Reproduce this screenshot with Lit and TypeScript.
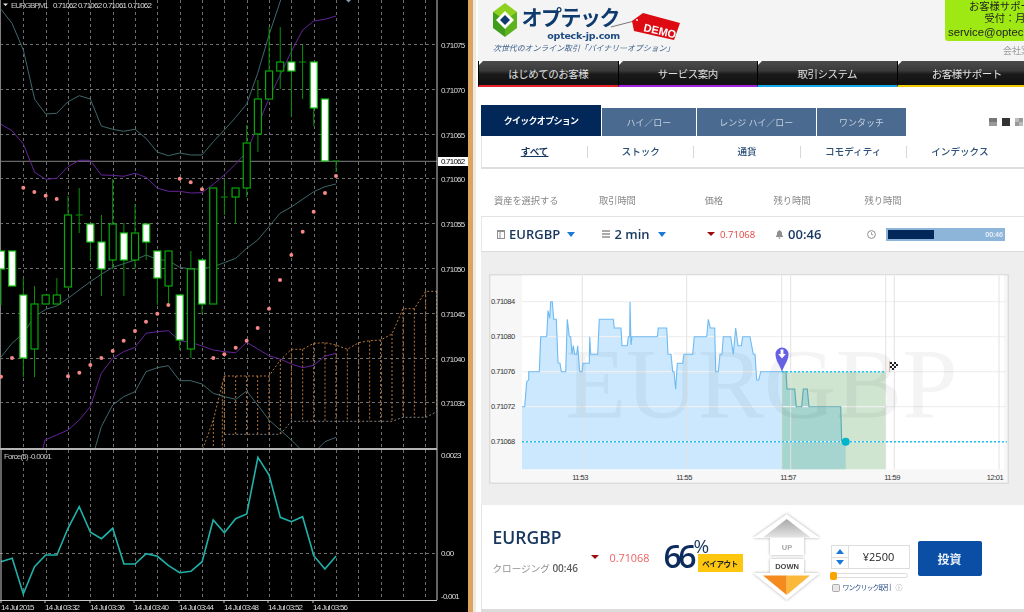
import { LitElement, html, css, svg } from 'lit';
import { customElement } from 'lit/decorators.js';

type Pt = [number, number];

// traced from the 3x crops: x and y are crop pixels, dy is the crop's top edge
const trace = (pts: Pt[], dy = 0) => pts.map(([x, y]) => `${(x / 3).toFixed(1)},${(dy + y / 3).toFixed(1)}`).join(' ');

const candleX = (i: number) => 1 + 11.17 * i;

// [wickTop, wickBottom, bodyTop, bodyBottom, white body]; bodyTop == bodyBottom is a doji
const CANDLES: [number, number, number, number, boolean][] = [
  [251, 305, 251, 269, true], [251, 286, 251, 286, true], [278, 377, 295, 358, true], [286, 377, 304, 349, false],
  [295, 304, 295, 304, false], [278, 304, 295, 304, false], [196, 287, 215, 287, false], [188, 233, 215, 215, false],
  [224, 260, 224, 242, true], [215, 296, 242, 269, true], [179, 269, 224, 260, false], [223, 296, 233, 260, true],
  [204, 269, 233, 260, false], [224, 260, 224, 242, true], [251, 305, 251, 278, true], [251, 304, 251, 286, false],
  [295, 350, 295, 340, true], [251, 358, 269, 349, false], [260, 314, 260, 304, true], [188, 304, 188, 304, false],
  [179, 215, 197, 197, false], [188, 224, 188, 197, false], [125, 197, 143, 188, false], [80, 152, 99, 134, false],
  [27, 99, 71, 99, false], [27, 89, 62, 71, false], [45, 117, 62, 71, true], [45, 99, 62, 62, false],
  [62, 126, 62, 108, true], [99, 161, 99, 161, true], [161, 172, 161, 161, false],
];

const UPPER_BAND: Pt[] = [[3, 28], [36, 70], [70, 150], [104, 298], [137, 342], [170, 340], [204, 305], [238, 287], [271, 297], [304, 378], [338, 388], [371, 394], [405, 388], [438, 415], [472, 456], [505, 467], [539, 459], [572, 465], [606, 465], [640, 425], [673, 390], [707, 352], [740, 312], [773, 220], [807, 105], [842, 0]];
const MID_TOP: Pt[] = [[3, 373], [36, 392], [70, 432], [104, 517], [137, 538], [170, 535], [204, 500], [238, 481], [271, 481], [304, 525], [338, 526], [371, 529], [405, 520], [438, 532], [472, 564], [505, 574], [539, 574], [572, 579], [606, 578], [640, 553], [673, 525], [707, 492], [740, 455], [773, 378], [807, 295], [842, 222], [874, 155], [908, 90], [941, 63], [975, 58], [1008, 48]];
const TEAL_MID: Pt[] = [[0, 415], [36, 370], [70, 340], [104, 290], [137, 268], [170, 258], [204, 235], [271, 185], [304, 163], [338, 142], [405, 120], [438, 105], [472, 118], [505, 122], [539, 142], [572, 147], [606, 147], [640, 140], [673, 128], [707, 115], [740, 85], [773, 60], [807, 20], [840, -20], [874, -39], [941, -85], [975, -100], [1008, -108]];
const MID_LOW: Pt[] = [[120, 720], [135, 660], [170, 645], [204, 630], [238, 600], [271, 560], [304, 460], [338, 415], [371, 395], [405, 382], [438, 340], [472, 335], [505, 332], [539, 362], [572, 367], [606, 378], [640, 390], [673, 395], [707, 398], [740, 367], [773, 387], [807, 407], [841, 417], [874, 432], [908, 443], [941, 436], [975, 408], [1008, 400]];
const TEAL_LOW: Pt[] = [[275, 720], [304, 620], [338, 555], [371, 530], [405, 515], [438, 455], [472, 443], [505, 437], [539, 482], [572, 482], [606, 492], [640, 520], [673, 530], [707, 538], [740, 513], [773, 555], [807, 600], [841, 630], [874, 660], [925, 710], [950, 690], [975, 665], [1008, 652]];
// y in 3x page pixels
const SAR: Pt[] = [[70, 563], [103, 576], [137, 587], [170, 597], [539, 536], [572, 547], [606, 568], [941, 635], [975, 579], [1008, 528], [3, 1130], [36, 1074], [204, 1129], [238, 1118], [271, 1095], [304, 1074], [338, 1053], [371, 1022], [405, 993], [438, 965], [472, 941], [505, 915], [640, 1074], [673, 1063], [707, 1043], [740, 1022], [773, 984], [807, 926], [840, 840], [874, 765], [908, 695]];
const CLOUD_TOP: Pt[] = [[600, 710], [640, 600], [673, 468], [807, 468], [841, 420], [874, 388], [908, 388], [941, 370], [975, 368], [1008, 375], [1042, 388], [1076, 368], [1109, 362], [1142, 360], [1176, 342], [1209, 266], [1243, 266], [1277, 214], [1310, 214]];
const CLOUD_LOW: Pt[] = [[673, 643], [841, 643], [874, 604], [1176, 604], [1209, 592], [1277, 592], [1310, 575]];
// [x, top] of the hatching between the two spans
const HATCH: Pt[] = [[640, 600], [667, 490], [673, 468], [707, 468], [740, 468], [773, 468], [807, 468], [841, 420], [874, 388], [908, 388], [941, 370], [975, 368], [1008, 375], [1042, 388], [1076, 368], [1109, 362], [1142, 360], [1176, 342], [1209, 266], [1243, 266], [1277, 214], [1310, 214]];
const hatchBottom = (x: number) => (x < 670 ? 690 : x < 850 ? 643 : x < 1190 ? 604 : x < 1300 ? 592 : 575);

const FORCE = [365, 355, 462, 380, 345, 345, 265, 200, 277, 296, 265, 372, 372, 341, 349, 377, 398, 394, 365, 240, 278, 236, 222, 52, 105, 232, 245, 230, 347, 387, 348];

const PRICES: [string, number][] = [['0.71075', 44.5], ['0.71070', 89.5], ['0.71065', 134.5], ['0.71060', 178.5], ['0.71055', 223.5], ['0.71050', 268.5], ['0.71045', 313.5], ['0.71040', 358.5], ['0.71035', 402.5]];
const TIMES: [string, number][] = [['14 Jul 2015', 1], ['14 Jul 03:32', 45], ['14 Jul 03:36', 90], ['14 Jul 03:40', 134], ['14 Jul 03:44', 179], ['14 Jul 03:48', 224], ['14 Jul 03:52', 268], ['14 Jul 03:56', 313]];
const V_GRID = Array.from({ length: 19 }, (_, i) => Math.round(23.3 + 22.34 * i) + 0.5);

@customElement('mt4-chart')
export class Mt4Chart extends LitElement {
  static styles = css`
    :host { display: block; width: 476px; height: 612px; background: #000; flex: none; position: relative; }
    svg { display: block; filter: blur(0.3px); }
    .grid { stroke: #6e6e6e; stroke-width: 1; stroke-dasharray: 3 3; }
    .frame { stroke: #c8c8c8; stroke-width: 1; fill: none; }
    .sep { stroke: #b4b4b4; stroke-width: 2; }
    .now { stroke: #808080; stroke-width: 1; }
    .wick { stroke: #079007; stroke-width: 1; }
    .body { stroke: #08a808; stroke-width: 1.2; fill: #000; }
    .body.white { fill: #fff; stroke: #12c012; }
    .band { fill: none; stroke: #3f686a; stroke-width: 1; }
    .mid { fill: none; stroke: #64249a; stroke-width: 1; }
    .sar { fill: #f58888; }
    .cloud { fill: none; stroke: #b5763a; stroke-width: 1; stroke-dasharray: 2 2; }
    .cloud-low { fill: none; stroke: #808080; stroke-width: 1; stroke-dasharray: 2 2; }
    .force { fill: none; stroke: #20b2aa; stroke-width: 1.6; }
    text { font-family: 'Liberation Sans', sans-serif; font-size: 8px; letter-spacing: -0.78px; fill: #dcdcdc; }
    text.title { fill: #c8c8c8; letter-spacing: -0.8px; }
    text.pair { fill: #c8c8c8; letter-spacing: -1.05px; }
    text.now-label { fill: #000; }
    .strip { fill: #dca45f; }
    .strip-edge { fill: #ebebe4; }
  `;

  render() {
    return html`
      <svg width="476" height="612" viewBox="0 0 476 612">
        <defs><clipPath id="main"><rect x="0" y="0" width="437" height="448"></rect></clipPath></defs>

        ${PRICES.map(([, y]) => svg`<line class="grid" x1="0" x2="437" y1=${y} y2=${y}></line>`)}
        ${V_GRID.map((x) => svg`<line class="grid" x1=${x} x2=${x} y1="0" y2="448"></line>`)}
        <line class="now" x1="0" x2="437" y1="161.3" y2="161.3"></line>
        <line class="now" x1="0.5" x2="0.5" y1="0" y2="448"></line>

        <g clip-path="url(#main)">
          ${HATCH.map(([x, top]) => svg`<line class="cloud" x1=${x / 3} x2=${x / 3} y1=${220 + top / 3} y2=${220 + hatchBottom(x) / 3}></line>`)}
          <polyline class="cloud" points=${trace(CLOUD_TOP, 220)}></polyline>
          <polyline class="cloud-low" points=${trace(CLOUD_LOW, 220)}></polyline>
          <polyline class="band" points=${trace(UPPER_BAND)}></polyline>
          <polyline class="band" points=${trace(TEAL_MID, 220)}></polyline>
          <polyline class="band" points=${trace(TEAL_LOW, 220)}></polyline>
          <polyline class="mid" points=${trace(MID_TOP)}></polyline>
          <polyline class="mid" points=${trace(MID_LOW, 220)}></polyline>

          ${CANDLES.map(([wt, wb, bt, bb, white], i) => {
            const x = candleX(i);
            return svg`
              <line class="wick" x1=${x} x2=${x} y1=${wt} y2=${wb}></line>
              ${bt === bb
                ? svg`<line class="wick" x1=${x - 3.5} x2=${x + 3.5} y1=${bt} y2=${bt}></line>`
                : svg`<rect class="body ${white ? 'white' : ''}" x=${x - 3.5} y=${bt} width="7" height=${bb - bt}></rect>`}
            `;
          })}
          ${SAR.map(([x, y]) => svg`<circle class="sar" cx=${x / 3} cy=${y / 3} r="2"></circle>`)}
        </g>

        <polygon points="3,3.5 8,3.5 5.5,6" fill="#e8e8e8"></polygon>
        <text class="pair" x="11" y="7.5">EURGBP,M1</text>
        <text x="53" y="7.5">0.71062 0.71062 0.71061 0.71062</text>
        <polygon points="346,0 351,0 348.5,2.5" fill="#8a9aa8"></polygon>

        <line class="frame" x1="437" x2="437" y1="0" y2="600"></line>
        ${PRICES.map(([label, y]) => svg`<text x="441" y=${y + 3}>${label}</text>`)}
        <rect x="438" y="157" width="30" height="9" fill="#fff"></rect>
        <text class="now-label" x="441" y="164.3">0.71062</text>

        <line class="sep" x1="0" x2="437" y1="449" y2="449"></line>
        <line class="grid" x1="0" x2="437" y1="553.5" y2="553.5"></line>
        ${V_GRID.map((x) => svg`<line class="grid" x1=${x} x2=${x} y1="450" y2="600"></line>`)}
        <polyline class="force" points=${FORCE.map((y, i) => `${candleX(i).toFixed(1)},${(440 + y / 3).toFixed(1)}`).join(' ')}></polyline>
        <text class="title" x="4" y="459">Force(5) -0.0001</text>
        <text x="441" y="457.5">0.0023</text>
        <text x="441" y="556">0.00</text>
        <text x="441" y="599">-0.001</text>
        <line class="frame" x1="1" x2="1" y1="450" y2="600"></line>
        <line class="frame" x1="0" x2="437" y1="600.5" y2="600.5"></line>
        ${TIMES.map(([label, x]) => svg`
          <line class="frame" x1=${x} x2=${x} y1="600" y2="603"></line>
          <text x=${x} y="609.5">${label}</text>
        `)}

        <rect class="strip" x="468" y="0" width="5" height="612"></rect>
        <rect class="strip-edge" x="473" y="0" width="3" height="612"></rect>
      </svg>
    `;
  }
}

const LINE: Pt[] = [[114, 425], [122, 425], [128, 350], [134, 345], [134, 320], [166, 320], [170, 215], [188, 215], [192, 137], [197, 160], [200, 110], [205, 110], [209, 163], [217, 163], [222, 293], [228, 295], [232, 320], [245, 320], [250, 163], [256, 215], [260, 215], [264, 268], [268, 242], [272, 268], [278, 268], [281, 242], [287, 320], [294, 320], [297, 295], [316, 295], [317, 215], [320, 268], [341, 268], [346, 163], [388, 163], [391, 189], [411, 189], [414, 242], [430, 242], [433, 215], [437, 215], [438, 110], [441, 240], [444, 215], [520, 215], [523, 189], [548, 189], [552, 268], [561, 268], [566, 320], [570, 320], [575, 373], [580, 295], [596, 295], [600, 268], [626, 268], [631, 215], [668, 215], [673, 163], [679, 189], [692, 189], [695, 320], [703, 320], [708, 268], [714, 268], [718, 215], [740, 215], [748, 268], [755, 189], [762, 242], [772, 242], [776, 215], [798, 215], [808, 268], [813, 268], [818, 345], [824, 345], [830, 320], [893, 320]];
const LINE_AFTER: Pt[] = [[893, 320], [906, 320], [909, 372], [932, 372], [937, 425], [953, 425], [958, 372], [970, 372], [975, 425], [1070, 425], [1073, 530], [1085, 530]];
const toPlot = (pts: Pt[]) => pts.map(([x, y]) => `${(484 + x / 3).toFixed(1)},${(265 + y / 3).toFixed(1)}`).join(' ');

const PLOT_H = [301.7, 336.7, 371.7, 406.7, 441.7];
const PLOT_V = [582.3, 686.7, 781.7, 790.7, 885.7, 894.3, 999];
const PLOT_LABELS: [string, number][] = [['0.71084', 301.7], ['0.71080', 336.7], ['0.71076', 371.7], ['0.71072', 406.7], ['0.71068', 441.7]];
const PLOT_TIMES: [string, number][] = [['11:53', 580], ['11:55', 684], ['11:57', 788], ['11:59', 892], ['12:01', 995]];

@customElement('option-chart')
export class OptionChart extends LitElement {
  static styles = css`
    :host { display: block; width: 520px; height: 210px; }
    svg { display: block; }
    .card { fill: #f7f7f7; stroke: #dcdcdc; stroke-width: 1.5; }
    .plot { fill: #fff; }
    .grid { stroke: #f0f0f0; stroke-width: 1.2; }
    .vline { stroke: #e2e2e2; stroke-width: 1; }
    .area { fill: #cbe8fe; }
    .zone { fill: #cfe5d0; }
    .area-after { fill: #a6d4ce; }
    .line { fill: none; stroke: #6dbbf2; stroke-width: 1.1; }
    .line-after { fill: none; stroke: #5aa8b4; stroke-width: 1.1; }
    .dots { stroke: #1cc4f0; stroke-width: 1.5; stroke-dasharray: 2 2; }
    .marker { fill: #00b4cc; }
    .pin { fill: #6560e4; }
    text { font-family: 'Liberation Sans', sans-serif; font-size: 7.5px; fill: #333; letter-spacing: -0.5px; }
    text.mark { font-family: 'Liberation Serif', serif; font-size: 100px; fill: #000; fill-opacity: 0.045; letter-spacing: -0.4px; }
  `;

  render() {
    return html`
      <svg width="520" height="210" viewBox="489 274 520 210">
        <rect class="card" x="489.7" y="274.7" width="518.6" height="208.6"></rect>
        <rect class="plot" x="522" y="275.5" width="482" height="194"></rect>

        <polygon class="area" points="${toPlot(LINE)} 781.7,469.3 522,469.3"></polygon>
        <rect class="zone" x="781.7" y="371.7" width="104" height="97.6"></rect>
        <polygon class="area-after" points="${toPlot(LINE_AFTER)} 845.7,469.3 781.7,469.3"></polygon>

        ${PLOT_H.map((y) => svg`<line class="grid" x1="522" x2="1008" y1=${y} y2=${y}></line>`)}
        ${PLOT_V.map((x) => svg`<line class="vline" x1=${x} x2=${x} y1="275.5" y2="469.3"></line>`)}
        <text class="mark" x="565" y="417">EURGBP</text>

        <polyline class="line" points=${toPlot(LINE)}></polyline>
        <polyline class="line-after" points=${toPlot(LINE_AFTER)}></polyline>
        <line class="dots" x1="522" x2="1007" y1="441.7" y2="441.7"></line>
        <line class="dots" x1="782" x2="886" y1="371.7" y2="371.7"></line>
        <circle class="marker" cx="845.7" cy="441.7" r="4"></circle>

        <path class="pin" d="M782 372 C780 365 775.5 361 775.5 354 A6.5 6.5 0 0 1 788.5 354 C788.5 361 784 365 782 372Z"></path>
        <path d="M780.6 349.5h2.8v4.5h2.4l-3.8 4.4-3.8-4.4h2.4z" fill="#fff"></path>

        <rect x="889" y="361" width="1" height="11" fill="#d8b8a8"></rect>
        <g fill="#222">
          <rect x="890" y="362" width="2" height="2"></rect><rect x="894" y="362" width="2" height="2"></rect>
          <rect x="892" y="364" width="2" height="2"></rect><rect x="896" y="364" width="2" height="2"></rect>
          <rect x="890" y="366" width="2" height="2"></rect><rect x="894" y="366" width="2" height="2"></rect>
          <rect x="892" y="368" width="2" height="2"></rect>
        </g>

        ${PLOT_LABELS.map(([label, y]) => svg`<text x="491" y=${y + 2.5}>${label}</text>`)}
        ${PLOT_TIMES.map(([label, x]) => svg`<text x=${x} y="480" text-anchor="middle">${label}</text>`)}
      </svg>
    `;
  }
}

@customElement('app-root')
export class AppRoot extends LitElement {
  static styles = css`
    :host {
      display: flex;
      width: 1024px;
      height: 612px;
      overflow: hidden;
      background: #fff;
      font-family: 'Open Sans', 'Noto Sans CJK JP', sans-serif;
      --navy: #17375e;
    }
    .page {
      width: 548px;
      flex: none;
      display: flex;
      flex-direction: column;
      box-sizing: border-box;
      padding-left: 2px;
      overflow: hidden;
      filter: blur(0.25px);
    }

    /* header */
    .header { height: 61px; flex: none; background: #f4f4f4; display: flex; justify-content: space-between; position: relative; }
    .logo { padding: 3px 0 0 15px; }
    .logo-top { display: flex; height: 37px; }
    .logo-mark { width: 24px; height: 34px; flex: none; display: block; }
    .logo-text { margin-left: 5px; width: 98px; display: flex; flex-direction: column; align-items: flex-end; }
    .logo-name { font: 700 21px/23px 'Noto Sans CJK JP', sans-serif; color: #0e3a6e; white-space: nowrap; letter-spacing: -1.5px; margin: 2px 1px 0 0; }
    .logo-url { font: 700 9.5px/11px 'DejaVu Sans', sans-serif; color: #1c4a80; letter-spacing: -0.25px; margin-top: 2px; }
    .logo-tag { font: italic 400 7.9px/12px 'Noto Sans CJK JP', sans-serif; color: #3f628c; white-space: nowrap; margin-top: 2px; }
    .demo { position: absolute; left: 133px; top: 10px; width: 72px; height: 34px; }
    .demo text { font: 700 11px 'Liberation Sans', sans-serif; fill: #fff; }
    .contact { width: 120px; flex: none; margin-right: -41px; height: 61px; }
    .contact-box {
      height: 41px;
      box-sizing: border-box;
      background: #9ee813;
      border-radius: 0 0 0 3px;
      padding-top: 1px;
      text-align: center;
      font-size: 10.3px;
      line-height: 12.3px;
      color: #222;
      white-space: nowrap;
      font-family: 'Liberation Sans', 'Noto Sans CJK JP', sans-serif;
    }
    .contact-box .mail { font-size: 11.4px; padding-left: 3px; }
    .company { font-size: 9px; color: #999; margin: 4px 0 0 58px; white-space: nowrap; line-height: 12px; }

    /* main nav */
    .nav { display: flex; height: 26px; flex: none; }
    .nav-item {
      width: 139.5px;
      flex: none;
      box-sizing: border-box;
      position: relative;
      display: flex;
      align-items: center;
      justify-content: center;
      color: #e0e0e0;
      font-size: 10.5px;
      background: linear-gradient(#4c4c4c, #3a3a3a 40%, #1a1a1a 55%, #111);
      border-left: 1px solid #000;
      border-bottom: 2px solid;
      letter-spacing: -0.5px;
    }
    .nav-item::before {
      content: '';
      position: absolute;
      left: 0;
      top: 0;
      border-style: solid;
      border-width: 4px 4px 0 0;
      border-color: #fff transparent transparent transparent;
    }

    /* product tabs */
    .tabs { display: flex; align-items: flex-end; gap: 1px; margin: 18px 0 0 3px; height: 31px; flex: none; position: relative; }
    .tab {
      height: 28px;
      display: flex;
      align-items: center;
      justify-content: center;
      background: #4b6a90;
      color: #c6d2e0;
      font-size: 9px;
      white-space: nowrap;
    }
    .tab.active { height: 31px; background: #02285a; color: #fff; font-weight: 700; letter-spacing: -0.7px; }
    .views { position: absolute; right: 1px; top: 12.5px; display: flex; gap: 5px; }
    .views span { width: 8px; height: 8px; background: #8c8c8c; display: block; }
    .views span:nth-child(1) { background: linear-gradient(#777 45%, #fff 45%, #fff 55%, #999 55%); }
    .views span:nth-child(2) { background: #333; }
    .views span:nth-child(3) { background: conic-gradient(#999 25%, #bbb 25%, #bbb 50%, #999 50%, #999 75%, #bbb 75%); }

    .categories {
      display: grid;
      grid-template-columns: repeat(5, 106.2px);
      flex: none;
      align-items: center;
      margin-left: 3px;
      border-left: 1px solid #e4e4e4;
      border-bottom: 2px solid #dedede;
      box-sizing: border-box;
      height: 33px;
    }
    .category {
      text-align: center;
      font-size: 9.6px;
      line-height: 12px;
      color: #2d5078;
      border-right: 1px solid #d8d8d8;
      font-weight: 500;
    }
    .category:last-child { border-right: none; }
    .category.on { color: #17375e; font-weight: 700; text-decoration: underline; }

    /* asset selection */
    .labels, .asset {
      display: grid;
      grid-template-columns: 105px 105.6px 69px 91px 1fr;
      margin-left: 3px;
    }
    .labels { margin-top: 26px; padding-left: 13px; height: 21px; flex: none; font-size: 9.3px; line-height: 12px; color: #888; letter-spacing: -0.1px; }
    .asset {
      height: 36px;
      flex: none;
      box-sizing: border-box;
      align-items: center;
      padding-left: 14.5px;
      border-top: 1px solid #e2e2e2;
      border-bottom: 1px solid #dcdcdc;
      border-left: 1px solid #e8e8e8;
      color: var(--navy);
      font-size: 13px;
      font-weight: 600;
    }
    .cell { display: flex; align-items: center; }
    .tri { width: 0; height: 0; display: block; border-style: solid; border-width: 5px 4.5px 0; border-color: #1c78d8 transparent transparent; flex: none; }
    .tri.red { border-top-color: #9c0c0c; border-width: 4.5px 4px 0; }
    .ico { display: block; flex: none; fill: #8f8f8f; }
    .rate { color: #e54040; font-size: 9.5px; font-weight: 400; }
    .bar { width: 119px; height: 13px; background: #8db5da; box-sizing: border-box; padding: 2px; position: relative; flex: none; margin-left: 10px; }
    .bar i { display: block; height: 100%; width: 46px; background: #02285a; }
    .bar b { position: absolute; right: 2px; top: 0; color: #eef4fa; font-size: 7px; line-height: 13px; font-weight: 600; }

    .chart-area { height: 253px; flex: none; background: #eee; margin-left: 3px; padding: 21.5px 0 0 8px; box-sizing: border-box; }

    /* trade ticket */
    .ticket {
      height: 104px;
      flex: none;
      margin-left: 3px;
      border-left: 1px solid #e4e4e4;
      border-bottom: 3px solid #dcdcdc;
      box-sizing: content-box;
      display: flex;
      align-items: flex-start;
    }
    .info { width: 98px; flex: none; margin: 20px 0 0 10.5px; }
    .info-name { font-size: 17.5px; line-height: 24px; color: var(--navy); font-weight: 600; }
    .info-close { font-size: 9.6px; line-height: 14px; color: #8f8f8f; margin-top: 12px; white-space: nowrap; }
    .info-close b { color: #5e5e5e; font-weight: 600; font-size: 10px; }
    .quote { width: 73px; flex: none; display: flex; align-items: center; gap: 11px; margin-top: 46px; height: 12px; }
    .quote span { font-size: 10.8px; color: #ee6262; }
    .payout { width: 89px; flex: none; display: flex; margin-top: 34px; }
    .payout-num { width: 34px; font-size: 32px; line-height: 30px; margin-top: 2px; font-weight: 600; letter-spacing: -3.6px; color: #0d2c5e; flex: none; }
    .payout-pct { font-size: 19px; line-height: 15px; color: #17375e; margin-left: -4px; letter-spacing: -0.5px; }
    .payout-tag { width: 45px; height: 18px; background: #fdc60f; color: #222; font-size: 7.5px; font-weight: 700; display: flex; align-items: center; justify-content: center; letter-spacing: -0.4px; }
    .arrows { width: 67px; height: 88px; flex: none; display: block; margin-top: 8px; overflow: visible; }
    .arrows text { font: 700 7.5px 'Liberation Sans', sans-serif; text-anchor: middle; }
    .glow { filter: drop-shadow(0 0 1.5px #aaa); }
    .amount { width: 79px; flex: none; margin: 40px 0 0 11px; }
    .amount-box { height: 24px; box-sizing: border-box; border: 1px solid #dedede; display: flex; }
    .stepper { width: 16px; flex: none; border-right: 1px solid #dedede; display: flex; flex-direction: column; }
    .stepper span { flex: 1; display: flex; align-items: center; justify-content: center; }
    .stepper span + span { border-top: 1px solid #dedede; }
    .tri.up { border-width: 0 4.5px 5px; border-color: transparent transparent #1c78d8; }
    .amount-val { flex: 1; text-align: center; font-size: 11px; font-weight: 500; line-height: 22px; color: #222; }
    .slider { width: 78px; height: 5px; margin: 4px 0 0 -1px; box-sizing: border-box; border: 1px solid #dcdcdc; border-radius: 3px; position: relative; }
    .slider i { position: absolute; left: -1px; top: -2.5px; width: 7px; height: 8px; border-radius: 2px; background: #f9a400; }
    .oneclick { display: flex; align-items: center; margin-top: 5px; white-space: nowrap; font-size: 7px; letter-spacing: -1px; line-height: 10px; color: #2a4f88; }
    .box { width: 8px; height: 8px; box-sizing: border-box; border: 1px solid #aaa; background: #e8e8e8; border-radius: 1.5px; margin: 0 3px 0 1px; flex: none; }
    .oneclick em { font-style: normal; color: #8a8a8a; margin-left: 5px; font-size: 7px; }
    .invest { width: 64px; height: 35px; flex: none; margin: 36px 0 0 8px; border-radius: 2px; background: #0a4ea6; color: #eaf1fa; font-size: 12px; font-weight: 700; display: flex; align-items: center; justify-content: center; }
  `;

  render() {
    const navItems: [string, string][] = [
      ['はじめてのお客様', '#e8222a'],
      ['サービス案内', '#a322e0'],
      ['取引システム', '#10a8e8'],
      ['お客様サポート', '#f0c800'],
    ];
    const tabs: [string, number][] = [['ハイ／ロー', 93.6], ['レンジ ハイ／ロー', 119.4], ['ワンタッチ', 89]];
    const cats = ['ストック', '通貨', 'コモディティ', 'インデックス'];

    return html`
      <mt4-chart></mt4-chart>
      <div class="page">
        <div class="header">
          <div class="logo">
            <div class="logo-top">
              <svg class="logo-mark" viewBox="0 0 24 34">
                <polygon points="12,0 24,9 24,17 12,17 0,17 0,9" fill="#8ed21f"></polygon>
                <polygon points="0,9 12,17 12,34 0,25" fill="#3f9c1c"></polygon>
                <polygon points="24,9 12,17 12,34 24,25" fill="#5cb31e"></polygon>
                <polygon points="12,8 21,17 12,26 3,17" fill="#fff"></polygon>
                <polygon points="12,12 17,17 12,22 7,17" fill="#0e3a6e"></polygon>
              </svg>
              <div class="logo-text">
                <div class="logo-name">オプテック</div>
                <div class="logo-url">opteck-jp.com</div>
              </div>
            </div>
            <div class="logo-tag">次世代のオンライン取引「バイナリーオプション」</div>
          </div>
          <svg class="demo" viewBox="0 0 72 34">
            <line x1="0" y1="17" x2="27" y2="10" stroke="#777" stroke-width="1"></line>
            <polygon points="32,3 69,13 63,30 23,21 21,11" fill="#dd0a12"></polygon>
            <circle cx="26" cy="10" r="1" fill="#eee"></circle>
            <text x="32" y="21" transform="rotate(13 32 21)">DEMO</text>
          </svg>
          <div class="contact">
            <div class="contact-box">
              <div>お客様サポート</div>
              <div>受付：月</div>
              <div class="mail">service@opteck-jp.com</div>
            </div>
            <div class="company">会社案内</div>
          </div>
        </div>

        <div class="nav">
          ${navItems.map(([label, color]) => html`<div class="nav-item" style="border-bottom-color:${color}">${label}</div>`)}
        </div>

        <div class="tabs">
          <div class="tab active" style="width:120px">クイックオプション</div>
          ${tabs.map(([label, w]) => html`<div class="tab" style="width:${w}px">${label}</div>`)}
          <div class="views"><span></span><span></span><span></span></div>
        </div>

        <div class="categories">
          <div class="category on">すべて</div>
          ${cats.map((c) => html`<div class="category">${c}</div>`)}
        </div>

        <div class="labels">
          <div>資産を選択する</div><div>取引時間</div><div>価格</div><div>残り時間</div><div>残り時間</div>
        </div>

        <div class="asset">
          <div class="cell">
            <svg class="ico" width="8" height="9" viewBox="0 0 8 9"><path d="M0 0h8v9H0zM1 2v6h1.5V2zM3.5 2v6h3.5V2z" fill-rule="evenodd"></path></svg>
            <span style="margin:0 7px 0 4.5px">EURGBP</span><i class="tri"></i>
          </div>
          <div class="cell">
            <svg class="ico" width="8.5" height="8" viewBox="0 0 9 8"><path d="M0 0h9v1.6H0zM0 3.2h9v1.6H0zM0 6.4h9V8H0z"></path></svg>
            <span style="margin:0 8px 0 4.5px">2 min</span><i class="tri"></i>
          </div>
          <div class="cell">
            <i class="tri red"></i><span class="rate" style="margin-left:5px">0.71068</span>
          </div>
          <div class="cell">
            <svg class="ico" width="7" height="9" viewBox="0 0 7 9"><path d="M3.5 0c.5 0 .7.3.7.7C5.500 1 6 2.200 6 3.500c0 1.500.5 2.300 1 2.800v.7H0v-.7c.5-.5 1-1.300 1-2.800C1 2.200 1.500 1 2.800.7c0-.4.2-.7.7-.7zM2.500 7.600h2C4.500 8.500 4 9 3.500 9s-1-.5-1-1.400z"></path></svg>
            <span style="margin-left:5px">00:46</span>
          </div>
          <div class="cell">
            <svg width="9" height="9" viewBox="0 0 9 9" style="flex:none"><circle cx="4.500" cy="4.500" r="3.900" fill="none" stroke="#8f8f8f"></circle><path d="M4.500 2.200v2.500h1.800" fill="none" stroke="#8f8f8f" stroke-width=".8"></path></svg>
            <div class="bar"><i></i><b>00:46</b></div>
          </div>
        </div>

        <div class="chart-area"><option-chart></option-chart></div>

        <div class="ticket">
          <div class="info">
            <div class="info-name">EURGBP</div>
            <div class="info-close">クロージング <b>00:46</b></div>
          </div>
          <div class="quote"><i class="tri red"></i><span>0.71068</span></div>
          <div class="payout">
            <div class="payout-num">66</div>
            <div>
              <div class="payout-pct">%</div>
              <div class="payout-tag">ペイアウト</div>
            </div>
          </div>
          <svg class="arrows" viewBox="753 513 67 88">
            <defs>
              <linearGradient id="upfill" x1="0" y1="0" x2="0" y2="1"><stop offset="0" stop-color="#a8a8a8"></stop><stop offset="1" stop-color="#e4e4e4"></stop></linearGradient>
            </defs>
            <path class="glow" d="M786.700 514 L820 538 H804 V555 H770 V538 H753 Z" fill="#fff"></path>
            <polygon points="786.700,519 763,537.500 810.500,537.500" fill="url(#upfill)"></polygon>
            <text x="787" y="550" fill="#a8a8a8">UP</text>
            <path class="glow" d="M786.700 600 L820 573 H804 V559 H770 V573 H753 Z" fill="#fff"></path>
            <polygon points="763,575.500 786.700,575.500 786.700,595" fill="#f58a1f"></polygon>
            <polygon points="810,575.500 786.700,575.500 786.700,595" fill="#fbb93c"></polygon>
            <text x="787" y="569" fill="#444">DOWN</text>
          </svg>
          <div class="amount">
            <div class="amount-box">
              <div class="stepper"><span><i class="tri up"></i></span><span><i class="tri"></i></span></div>
              <div class="amount-val">¥2500</div>
            </div>
            <div class="slider"><i></i></div>
            <div class="oneclick"><span class="box"></span>ワンクリック取引<em>ⓘ</em></div>
          </div>
          <div class="invest">投資</div>
        </div>
      </div>
    `;
  }
}
